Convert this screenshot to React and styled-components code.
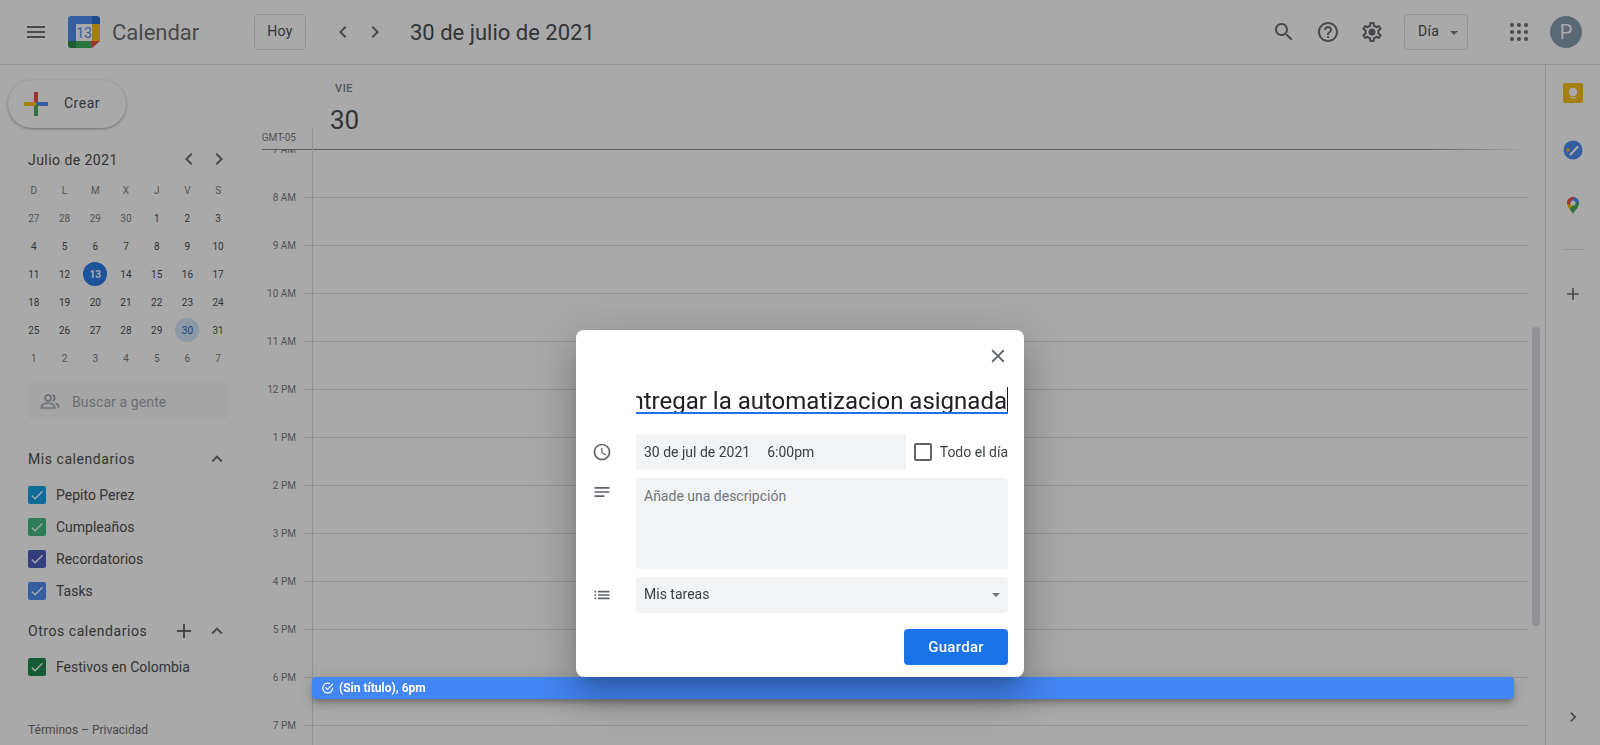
import React from 'react';
import styled, { createGlobalStyle } from 'styled-components';

const GlobalStyle = createGlobalStyle`
    html, body {
        margin: 0;
        height: 100%;
        overflow: hidden;
        background: #ffffff;
        font-family: Roboto, "Liberation Sans", sans-serif;
        color: #3c4043;
    }
`;

const paths = {
    menu: 'M3 18h18v-2H3v2zm0-5h18v-2H3v2zm0-7v2h18V6H3z',
    left: 'M15.41 7.41L14 6l-6 6 6 6 1.41-1.41L10.83 12z',
    right: 'M10 6L8.59 7.41 13.17 12l-4.58 4.59L10 18l6-6z',
    search: 'M15.5 14h-.79l-.28-.27C15.41 12.59 16 11.11 16 9.5 16 5.91 13.09 3 9.5 3S3 5.91 3 9.5 5.91 16 9.5 16c1.61 0 3.09-.59 4.23-1.57l.27.28v.79l5 4.99L20.49 19l-4.99-5zm-6 0C7.01 14 5 11.99 5 9.5S7.01 5 9.5 5 14 7.01 14 9.5 11.99 14 9.5 14z',
    help: 'M11 18h2v-2h-2v2zm1-16C6.48 2 2 6.48 2 12s4.48 10 10 10 10-4.48 10-10S17.52 2 12 2zm0 18c-4.41 0-8-3.59-8-8s3.59-8 8-8 8 3.59 8 8-3.59 8-8 8zm0-14c-2.21 0-4 1.79-4 4h2c0-1.1.9-2 2-2s2 .9 2 2c0 2-3 1.75-3 5h2c0-2.25 3-2.5 3-5 0-2.21-1.79-4-4-4z',
    gear: 'M19.43 12.98c.04-.32.07-.64.07-.98 0-.34-.03-.66-.07-.98l2.11-1.65c.19-.15.24-.42.12-.64l-2-3.46c-.09-.16-.26-.25-.44-.25-.06 0-.12.01-.17.03l-2.49 1c-.52-.4-1.08-.73-1.69-.98l-.38-2.65C14.46 2.18 14.25 2 14 2h-4c-.25 0-.46.18-.49.42l-.38 2.65c-.61.25-1.17.59-1.69.98l-2.49-1c-.06-.02-.12-.03-.18-.03-.17 0-.34.09-.43.25l-2 3.46c-.13.22-.07.49.12.64l2.11 1.65c-.04.32-.07.65-.07.98 0 .33.03.66.07.98l-2.11 1.65c-.19.15-.24.42-.12.64l2 3.46c.09.16.26.25.44.25.06 0 .12-.01.17-.03l2.49-1c.52.4 1.08.73 1.69.98l.38 2.65c.03.24.24.42.49.42h4c.25 0 .46-.18.49-.42l.38-2.65c.61-.25 1.17-.59 1.69-.98l2.49 1c.06.02.12.03.18.03.17 0 .34-.09.43-.25l2-3.46c.12-.22.07-.49-.12-.64l-2.11-1.65zm-1.98-1.71c.04.31.05.52.05.73 0 .21-.02.43-.05.73l-.14 1.13.89.7 1.08.84-.7 1.21-1.27-.51-1.04-.42-.9.68c-.43.32-.84.56-1.25.73l-1.06.43-.16 1.13-.2 1.35h-1.4l-.19-1.35-.16-1.13-1.06-.43c-.43-.18-.83-.41-1.23-.71l-.91-.7-1.06.43-1.27.51-.7-1.21 1.08-.84.89-.7-.14-1.13c-.03-.31-.05-.54-.05-.74s.02-.43.05-.73l.14-1.13-.89-.7-1.08-.84.7-1.21 1.27.51 1.04.42.9-.68c.43-.32.84-.56 1.25-.73l1.06-.43.16-1.13.2-1.35h1.39l.19 1.35.16 1.13 1.06.43c.43.18.83.41 1.23.71l.91.7 1.06-.43 1.27-.51.7 1.21-1.07.85-.89.7.14 1.13zM12 8.5a3.5 3.5 0 1 0 0 7 3.5 3.5 0 0 0 0-7z',
    up: 'M12 8l-6 6 1.41 1.41L12 10.83l4.59 4.58L18 14z',
    add: 'M19 13h-6v6h-2v-6H5v-2h6V5h2v6h6v2z',
    close: 'M19 6.41L17.59 5 12 10.59 6.41 5 5 6.41 10.59 12 5 17.59 6.41 19 12 13.41 17.59 19 19 17.59 13.41 12z',
    notes: 'M3 18h12v-2H3v2zM3 6v2h18V6H3zm0 7h18v-2H3v2z',
    clock: 'M11.99 2C6.47 2 2 6.48 2 12s4.47 10 9.99 10C17.52 22 22 17.52 22 12S17.52 2 11.99 2zM12 20c-4.42 0-8-3.58-8-8s3.58-8 8-8 8 3.58 8 8-3.58 8-8 8zm.5-13H11v6l5.25 3.15.75-1.23-4.5-2.67z',
    list: 'M3 13h2v-2H3v2zm0 4h2v-2H3v2zm0-8h2V7H3v2zm4 4h14v-2H7v2zm0 4h14v-2H7v2zM7 7v2h14V7H7z',
    check: 'M9 16.17L4.83 12l-1.42 1.41L9 19 21 7l-1.41-1.41z',
};

const Svg = styled.svg`
    display: block;
    flex: none;
    fill: ${(p) => p.$color || '#5f6368'};
`;

const Icon = ({ name, size = 24, color }) => (
    <Svg $color={color} width={size} height={size} viewBox="0 0 24 24">
        <path d={paths[name]} />
    </Svg>
);

const Drawing = styled.svg`
    display: block;
    flex: none;
`;

const Page = styled.div`
    width: 1600px;
    height: 745px;
    display: flex;
    flex-direction: column;
    overflow: hidden;
`;

/* header */
const Header = styled.header`
    height: 64px;
    flex: none;
    display: flex;
    align-items: center;
    border-bottom: 1px solid #dadce0;
`;

const MenuSlot = styled.div`
    width: 24px;
    margin-left: 24px;
    margin-right: 20px;
`;

const Brand = styled.span`
    margin-left: 12px;
    width: 142px;
    font-size: 22px;
    color: #5f6368;
`;

const OutlineButton = styled.div`
    box-sizing: border-box;
    height: 36px;
    padding-bottom: 2px;
    border: 1px solid #dadce0;
    border-radius: 4px;
    display: flex;
    align-items: center;
    font-size: 14px;
    letter-spacing: 0.3px;
    color: #3c4043;
`;

const TodayButton = styled(OutlineButton)`
    width: 52px;
    justify-content: center;
`;

const NavPair = styled.div`
    display: flex;
    gap: 8px;
    margin-left: 25px;
`;

const DateTitle = styled.h1`
    margin: 0 0 0 23px;
    font-size: 22px;
    font-weight: 400;
    color: #3c4043;
    white-space: nowrap;
`;

const HeaderRight = styled.div`
    margin-left: auto;
    display: flex;
    align-items: center;
`;

const ToolIcons = styled.div`
    display: flex;
    gap: 20px;
    margin-right: 20px;
`;

const ViewButton = styled(OutlineButton)`
    width: 64px;
    padding-left: 13px;
    gap: 11px;
`;

const Caret = styled.i`
    display: block;
    flex: none;
    width: 0;
    height: 0;
    margin-top: ${(p) => p.$top || 0}px;
    border-left: 4px solid transparent;
    border-right: 4px solid transparent;
    border-top: 4px solid #70757a;
`;

const AppsGrid = styled.div`
    margin-left: 42px;
    display: grid;
    grid-template-columns: repeat(3, 4px);
    gap: 3px;
    i {
        width: 4px;
        height: 4px;
        border-radius: 50%;
        background: #5f6368;
    }
`;

const Avatar = styled.div`
    width: 32px;
    height: 32px;
    margin-left: 22px;
    margin-right: 18px;
    border-radius: 50%;
    background: #7f98a8;
    color: #ffffff;
    font-size: 20px;
    display: flex;
    align-items: center;
    justify-content: center;
`;

/* body */
const Body = styled.div`
    flex: 1;
    display: flex;
    min-height: 0;
`;

const Sidebar = styled.aside`
    width: 256px;
    flex: none;
    display: flex;
    flex-direction: column;
`;

const CreateButton = styled.div`
    box-sizing: border-box;
    width: 118px;
    height: 48px;
    margin: 15px 0 0 8px;
    padding-left: 16px;
    border-radius: 24px;
    display: flex;
    align-items: center;
    gap: 16px;
    font-size: 14px;
    letter-spacing: 0.5px;
    color: #3c4043;
    background: #ffffff;
    box-shadow: 0 1px 2px 0 rgba(60, 64, 67, 0.3), 0 1px 3px 1px rgba(60, 64, 67, 0.15);
`;

const CreateLabel = styled.span`
    padding-bottom: 2px;
`;

const MiniHead = styled.div`
    margin: 19px 25px 0 28px;
    height: 24px;
    display: flex;
    align-items: center;
    font-size: 14px;
    letter-spacing: 0.45px;
    color: #3c4043;
`;

const MiniTitle = styled.span`
    padding-top: 2px;
`;

const MiniNav = styled.div`
    margin-left: auto;
    display: flex;
    gap: 6px;
`;

const MiniGrid = styled.div`
    margin: 5px 0 0 18.5px;
    width: 215px;
    display: grid;
    grid-template-columns: repeat(7, 1fr);
    grid-auto-rows: 28px;
    place-items: center;
`;

const WeekDay = styled.span`
    font-size: 10px;
    color: #70757a;
`;

const Day = styled.span`
    width: 24px;
    height: 24px;
    border-radius: 50%;
    display: flex;
    align-items: center;
    justify-content: center;
    font-size: 10px;
    color: ${(p) => (p.$today ? '#ffffff' : p.$selected ? '#185abc' : p.$muted ? '#70757a' : '#3c4043')};
    background: ${(p) => (p.$today ? '#1a73e8' : p.$selected ? '#d2e3fc' : 'transparent')};
    font-weight: ${(p) => (p.$today ? 700 : 400)};
`;

const PeopleSearch = styled.div`
    box-sizing: border-box;
    height: 36px;
    margin: 11px 0 0 28px;
    width: 200px;
    padding: 2px 0 0 12px;
    display: flex;
    align-items: center;
    gap: 12px;
    border-radius: 4px;
    background: #f8f9fa;
    color: #9aa0a6;
    font-size: 14px;
    letter-spacing: 0.1px;
`;

const SectionHead = styled.div`
    margin: ${(p) => p.$top}px 28px 0 28px;
    height: 24px;
    display: flex;
    align-items: center;
    font-size: 14px;
    letter-spacing: 0.55px;
    color: #3c4043;
`;

const SectionTools = styled.div`
    margin-left: auto;
    display: flex;
    align-items: center;
    gap: 10px;
`;

const CalendarList = styled.div`
    margin: 8px 0 0 28px;
    display: flex;
    flex-direction: column;
`;

const CalendarItem = styled.div`
    height: 32px;
    display: flex;
    align-items: center;
    gap: 10px;
    font-size: 14px;
    color: #3c4043;
`;

const CheckBox = styled.span`
    width: 18px;
    height: 18px;
    border-radius: 2px;
    background: ${(p) => p.$color};
    display: flex;
    align-items: center;
    justify-content: center;
`;

const Terms = styled.div`
    margin: 39px 0 0 28px;
    height: 16px;
    line-height: 16px;
    font-size: 12px;
    color: #5f6368;
`;

/* day view */
const Main = styled.main`
    flex: 1;
    min-width: 0;
    display: flex;
    flex-direction: column;
`;

const DayHead = styled.div`
    height: 84px;
    flex: none;
    display: flex;
`;

const ZoneCell = styled.div`
    width: 40px;
    padding-right: 16px;
    padding-top: 66px;
    font-size: 10px;
    line-height: 14px;
    color: #70757a;
    text-align: right;
    white-space: nowrap;
`;

const DayTitle = styled.div`
    width: 64px;
    display: flex;
    flex-direction: column;
    align-items: center;
    position: relative;
    &::before {
        content: '';
        position: absolute;
        left: 0;
        bottom: 0;
        width: 1px;
        height: 20px;
        background: #dadce0;
    }
`;

const DayName = styled.span`
    margin-top: 17px;
    font-size: 11px;
    line-height: 14px;
    font-weight: 500;
    letter-spacing: 0.5px;
    color: #70757a;
`;

const DayNumber = styled.span`
    margin-top: 8px;
    padding-left: 1px;
    font-size: 26px;
    line-height: 32px;
    color: #3c4043;
`;

const HeadRule = styled.div`
    height: 1px;
    flex: none;
    margin-left: 6px;
    background: linear-gradient(to right, #80868b 92%, rgba(128, 134, 139, 0) 100%);
`;

const Hours = styled.div`
    flex: 1;
    min-height: 0;
    margin-top: -1px;
    overflow: hidden;
`;

const HourRow = styled.div`
    height: 48px;
    display: flex;
`;

const HourLabel = styled.span`
    width: 40px;
    flex: none;
    text-align: right;
    font-size: 10px;
    line-height: 14px;
    height: 14px;
    color: #70757a;
    transform: translateY(-6px);
`;

const Tick = styled.span`
    width: 8px;
    margin-left: 8px;
    flex: none;
    box-sizing: border-box;
    border-top: ${(p) => (p.$first ? 'none' : '1px solid #dadce0')};
`;

const HourCell = styled.div`
    flex: 1;
    position: relative;
    box-sizing: border-box;
    border-left: 1px solid #dadce0;
    border-top: ${(p) => (p.$first ? 'none' : '1px solid #dadce0')};
`;

const Event = styled.div`
    position: absolute;
    z-index: 11;
    left: -1px;
    right: 14px;
    top: -1px;
    height: 22px;
    box-sizing: border-box;
    padding-left: 9px;
    border-radius: 4px;
    background: #4285f4;
    color: #ffffff;
    display: flex;
    align-items: center;
    gap: 4px;
    font-size: 12px;
    font-weight: 700;
    box-shadow: 0 6px 10px 0 rgba(0, 0, 0, 0.14), 0 1px 18px 0 rgba(0, 0, 0, 0.12), 0 3px 5px -1px rgba(0, 0, 0, 0.2);
`;

const ScrollTrack = styled.div`
    width: 17px;
    flex: none;
    padding: 262px 0 0 4px;
    box-sizing: border-box;
`;

const ScrollThumb = styled.div`
    width: 8px;
    height: 299px;
    border-radius: 4px;
    background: #dadce0;
`;

const Rail = styled.aside`
    width: 55px;
    flex: none;
    box-sizing: border-box;
    padding-right: 1px;
    border-left: 1px solid #dadce0;
    display: flex;
    flex-direction: column;
    align-items: center;
`;

const RailIcon = styled.div`
    width: 20px;
    height: 20px;
    margin-top: ${(p) => p.$top}px;
    flex: none;
`;

const RailRule = styled.div`
    width: 20px;
    height: 1px;
    flex: none;
    margin-top: 34px;
    background: #dadce0;
`;

const RailPlus = styled.div`
    margin-top: 34px;
`;

const RailBottom = styled.div`
    margin-top: auto;
    margin-bottom: 18px;
`;

/* dialog */
const Scrim = styled.div`
    position: fixed;
    inset: 0;
    z-index: 10;
    background: rgba(33, 33, 33, 0.39);
`;

const Dialog = styled.section`
    position: fixed;
    z-index: 12;
    left: 576px;
    top: 330px;
    width: 448px;
    height: 347px;
    box-sizing: border-box;
    padding: 0 16px 12px 16px;
    border-radius: 8px;
    background: #ffffff;
    display: flex;
    flex-direction: column;
    box-shadow: 0 24px 38px 3px rgba(0, 0, 0, 0.14), 0 9px 46px 8px rgba(0, 0, 0, 0.12), 0 11px 15px -7px rgba(0, 0, 0, 0.2);
`;

const DialogTop = styled.div`
    height: 52px;
    flex: none;
    display: flex;
    justify-content: flex-end;
    align-items: center;
    margin-right: -1px;
`;

const FormRow = styled.div`
    display: flex;
    margin-top: ${(p) => p.$top || 0}px;
`;

const RowIcon = styled.div`
    width: 44px;
    flex: none;
    display: flex;
    padding-top: ${(p) => p.$top || 0}px;
`;

const TitleField = styled.div`
    flex: none;
    width: 372px;
    height: 32px;
    box-sizing: border-box;
    margin-left: 44px;
    border-bottom: 2px solid #1a73e8;
    display: flex;
    justify-content: flex-end;
    overflow: hidden;
    font-size: 24px;
    line-height: 38px;
    color: #202124;
    white-space: nowrap;
`;

const TitleCaret = styled.span`
    width: 1px;
    height: 25px;
    flex: none;
    margin-top: 5px;
    background: #202124;
`;

const FieldBox = styled.div`
    box-sizing: border-box;
    padding: 0 8px;
    background: #f1f3f4;
    font-size: 14px;
    color: #3c4043;
    display: flex;
    align-items: center;
    height: 36px;
`;

const DateField = styled(FieldBox)`
    width: 270px;
    gap: 17px;
`;

const AllDay = styled.label`
    margin-left: 8px;
    display: flex;
    align-items: center;
    gap: 8px;
    font-size: 14px;
    color: #3c4043;
    white-space: nowrap;
`;

const EmptyBox = styled.span`
    box-sizing: border-box;
    width: 18px;
    height: 18px;
    border: 2px solid #5f6368;
    border-radius: 2px;
`;

const DescriptionField = styled(FieldBox)`
    flex: 1;
    height: 91px;
    align-items: flex-start;
    padding-top: 10px;
    border-radius: 4px;
    color: #70757a;
`;

const SelectField = styled(FieldBox)`
    flex: 1;
    justify-content: space-between;
    border-radius: 4px;
    padding-bottom: 2px;
`;

const DialogFoot = styled.div`
    margin-top: 16px;
    display: flex;
    justify-content: flex-end;
`;

const SaveButton = styled.div`
    width: 104px;
    height: 36px;
    padding-bottom: 1px;
    box-sizing: border-box;
    border-radius: 4px;
    background: #1a73e8;
    color: #ffffff;
    font-size: 15px;
    font-weight: 500;
    letter-spacing: 0.3px;
    display: flex;
    align-items: center;
    justify-content: center;
`;

const Logo = () => (
    <Drawing width="32" height="32" viewBox="0 0 32 32">
        <rect x="8" y="8" width="16" height="17" fill="#ffffff" />
        <path d="M3 0H8V8H0V3a3 3 0 0 1 3-3z" fill="#4285f4" />
        <rect x="8" y="0" width="16" height="8" fill="#4285f4" />
        <path d="M24 0h5a3 3 0 0 1 3 3v5h-8z" fill="#1967d2" />
        <rect x="0" y="8" width="8" height="17" fill="#4285f4" />
        <rect x="24" y="8" width="8" height="17" fill="#fbbc04" />
        <path d="M0 25h8v7H3a3 3 0 0 1-3-3z" fill="#188038" />
        <rect x="8" y="25" width="16" height="7" fill="#34a853" />
        <path d="M24 25h8l-8 7z" fill="#ea4335" />
        <text x="16" y="22" textAnchor="middle" fontFamily="Roboto, sans-serif" fontSize="14" fill="#4285f4">13</text>
    </Drawing>
);

const ColorPlus = () => (
    <Drawing width="24" height="24" viewBox="6 6 24 24">
        <rect x="16" y="6" width="4" height="12" fill="#ea4335" />
        <rect x="18" y="16" width="12" height="4" fill="#4285f4" />
        <rect x="16" y="18" width="4" height="12" fill="#34a853" />
        <rect x="6" y="16" width="12" height="4" fill="#fbbc04" />
    </Drawing>
);

const PeopleIcon = () => (
    <Drawing width="20" height="20" viewBox="0 0 20 20" fill="none" stroke="#9aa0a6" strokeWidth="1.7">
        <circle cx="8" cy="6" r="3" />
        <path d="M1.500 16v-1.500c0-2 3.800-3.500 6.500-3.500s6.500 1.500 6.500 3.500V16z" />
        <path d="M12.500 3.100a3 3 0 0 1 0 5.800" />
        <path d="M15.500 11.300c1.700.6 3 1.700 3 3.200V16" />
    </Drawing>
);

const KeepIcon = () => (
    <Drawing width="20" height="20" viewBox="0 0 20 20">
        <rect width="20" height="20" rx="2" fill="#fbbc04" />
        <circle cx="10" cy="9" r="4.200" fill="#ffffff" />
        <rect x="7.600" y="14" width="4.800" height="1.400" fill="#ffffff" />
    </Drawing>
);

const TasksIcon = () => (
    <Drawing width="20" height="20" viewBox="0 0 20 20">
        <circle cx="10" cy="10" r="9.500" fill="#4285f4" />
        <path d="M7.500 14.500l7-7.500" stroke="#ffffff" strokeWidth="2.200" strokeLinecap="round" fill="none" />
        <circle cx="5" cy="10" r="1.700" fill="#fbbc04" />
    </Drawing>
);

const MapsIcon = () => (
    <Drawing width="20" height="20" viewBox="0 0 20 20">
        <path d="M10 19c-1-3-6-6-6-11 0-1.600.6-3 1.600-4L10 8z" fill="#fbbc04" />
        <path d="M5.600 4A6.200 6.200 0 0 1 10 1.800c.7 0 1.300.1 1.900.3L8 8 6 10 4 8c0-1.600.6-3 1.600-4z" fill="#ea4335" />
        <path d="M11.900 2.100A6.200 6.200 0 0 1 16 8L10 8 8 6z" fill="#4285f4" />
        <path d="M16 8c0 5-5 8-6 11-.5-1.500-2-3-3.400-5L12.500 8z" fill="#34a853" />
        <circle cx="10" cy="8" r="2.500" fill="#ffffff" />
    </Drawing>
);

const EventCheck = () => (
    <Drawing width="14" height="14" viewBox="0 0 24 24">
        <path d="M20 11.500V12a8.500 8.500 0 1 1-5-7.700" fill="none" stroke="#ffffff" strokeWidth="2" />
        <path d="M7.500 11l3.500 3.500 9.500-9.500" fill="none" stroke="#ffffff" strokeWidth="2" />
    </Drawing>
);

const weekDays = ['D', 'L', 'M', 'X', 'J', 'V', 'S'];

const monthDays = [
    27, 28, 29, 30, 1, 2, 3,
    4, 5, 6, 7, 8, 9, 10,
    11, 12, 13, 14, 15, 16, 17,
    18, 19, 20, 21, 22, 23, 24,
    25, 26, 27, 28, 29, 30, 31,
    1, 2, 3, 4, 5, 6, 7,
];

const myCalendars = [
    { name: 'Pepito Perez', color: '#039be5' },
    { name: 'Cumpleaños', color: '#33b679' },
    { name: 'Recordatorios', color: '#3f51b5' },
    { name: 'Tasks', color: '#4285f4' },
];

const hours = ['7 AM', '8 AM', '9 AM', '10 AM', '11 AM', '12 PM', '1 PM', '2 PM', '3 PM', '4 PM', '5 PM', '6 PM', '7 PM'];

const App = () => {
    return (
        <Page>
            <GlobalStyle />
            <Header>
                <MenuSlot><Icon name="menu" /></MenuSlot>
                <Logo />
                <Brand>Calendar</Brand>
                <TodayButton>Hoy</TodayButton>
                <NavPair>
                    <Icon name="left" />
                    <Icon name="right" />
                </NavPair>
                <DateTitle>30 de julio de 2021</DateTitle>
                <HeaderRight>
                    <ToolIcons>
                        <Icon name="search" />
                        <Icon name="help" />
                        <Icon name="gear" />
                    </ToolIcons>
                    <ViewButton>Día<Caret $top={3} /></ViewButton>
                    <AppsGrid>
                        {Array.from({ length: 9 }, (_, i) => <i key={i} />)}
                    </AppsGrid>
                    <Avatar>P</Avatar>
                </HeaderRight>
            </Header>
            <Body>
                <Sidebar>
                    <CreateButton><ColorPlus /><CreateLabel>Crear</CreateLabel></CreateButton>
                    <MiniHead>
                        <MiniTitle>Julio de 2021</MiniTitle>
                        <MiniNav>
                            <Icon name="left" />
                            <Icon name="right" />
                        </MiniNav>
                    </MiniHead>
                    <MiniGrid>
                        {weekDays.map((d) => <WeekDay key={d}>{d}</WeekDay>)}
                        {monthDays.map((d, i) => (
                            <Day
                                key={i}
                                $muted={i < 4 || i > 34}
                                $today={i === 16}
                                $selected={i === 33}
                            >
                                {d}
                            </Day>
                        ))}
                    </MiniGrid>
                    <PeopleSearch>
                        <PeopleIcon />
                        Buscar a gente
                    </PeopleSearch>
                    <SectionHead $top={28}>
                        Mis calendarios
                        <SectionTools><Icon name="up" size={22} /></SectionTools>
                    </SectionHead>
                    <CalendarList>
                        {myCalendars.map((c) => (
                            <CalendarItem key={c.name}>
                                <CheckBox $color={c.color}><Icon name="check" size={16} color="#ffffff" /></CheckBox>
                                {c.name}
                            </CalendarItem>
                        ))}
                    </CalendarList>
                    <SectionHead $top={12}>
                        Otros calendarios
                        <SectionTools>
                            <Icon name="add" />
                            <Icon name="up" size={22} />
                        </SectionTools>
                    </SectionHead>
                    <CalendarList>
                        <CalendarItem>
                            <CheckBox $color="#0b8043"><Icon name="check" size={16} color="#ffffff" /></CheckBox>
                            Festivos en Colombia
                        </CalendarItem>
                    </CalendarList>
                    <Terms>Términos – Privacidad</Terms>
                </Sidebar>
                <Main>
                    <DayHead>
                        <ZoneCell>GMT-05</ZoneCell>
                        <DayTitle>
                            <DayName>VIE</DayName>
                            <DayNumber>30</DayNumber>
                        </DayTitle>
                    </DayHead>
                    <HeadRule />
                    <Hours>
                        {hours.map((h, i) => (
                            <HourRow key={h}>
                                <HourLabel>{h}</HourLabel>
                                <Tick $first={i === 0} />
                                <HourCell $first={i === 0}>
                                    {h === '6 PM' && (
                                        <Event><EventCheck />(Sin título), 6pm</Event>
                                    )}
                                </HourCell>
                            </HourRow>
                        ))}
                    </Hours>
                </Main>
                <ScrollTrack><ScrollThumb /></ScrollTrack>
                <Rail>
                    <RailIcon $top={18}><KeepIcon /></RailIcon>
                    <RailIcon $top={37}><TasksIcon /></RailIcon>
                    <RailIcon $top={35}><MapsIcon /></RailIcon>
                    <RailRule />
                    <RailPlus><Icon name="add" size={20} /></RailPlus>
                    <RailBottom><Icon name="right" size={20} /></RailBottom>
                </Rail>
            </Body>
            <Scrim />
            <Dialog>
                <DialogTop><Icon name="close" size={22} /></DialogTop>
                <TitleField>
                    Entregar la automatizacion asignada
                    <TitleCaret />
                </TitleField>
                <FormRow $top={20}>
                    <RowIcon $top={8}><Icon name="clock" size={20} /></RowIcon>
                    <DateField><span>30 de jul de 2021</span><span>6:00pm</span></DateField>
                    <AllDay><EmptyBox />Todo el día</AllDay>
                </FormRow>
                <FormRow $top={8}>
                    <RowIcon $top={4}><Icon name="notes" size={20} /></RowIcon>
                    <DescriptionField>Añade una descripción</DescriptionField>
                </FormRow>
                <FormRow $top={8}>
                    <RowIcon $top={8}><Icon name="list" size={20} /></RowIcon>
                    <SelectField>Mis tareas<Caret $top={2} /></SelectField>
                </FormRow>
                <DialogFoot><SaveButton>Guardar</SaveButton></DialogFoot>
            </Dialog>
        </Page>
    );
};

export default App;
